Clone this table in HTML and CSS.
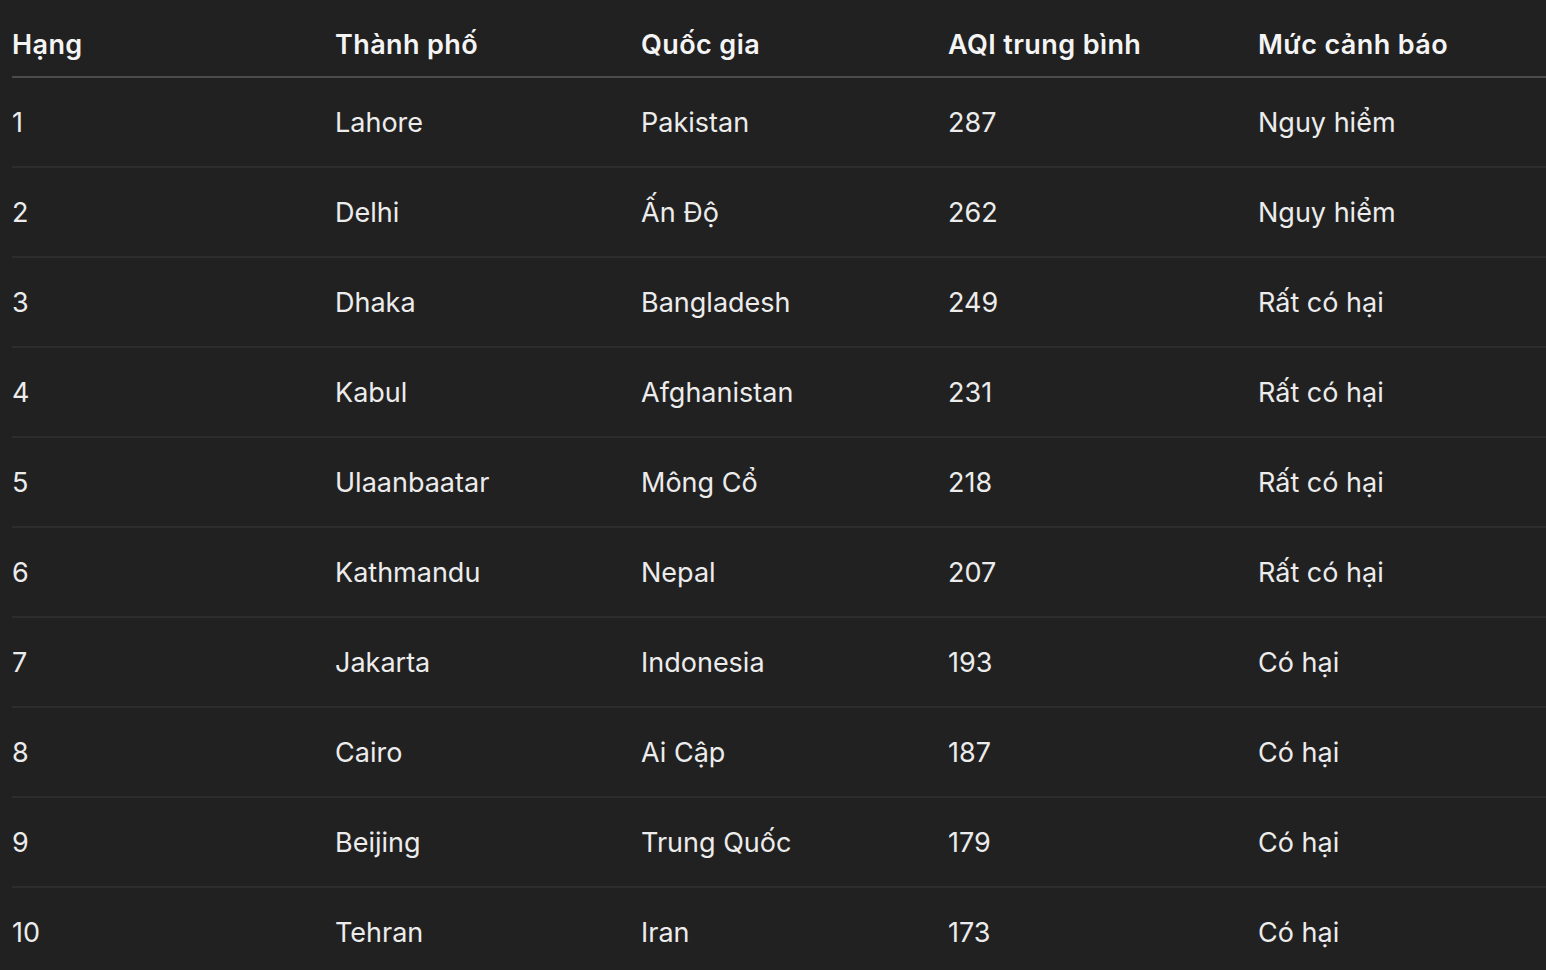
FILE: index.html
```html
<!DOCTYPE html>
<html lang="vi">
<head>
<meta charset="utf-8">
<title>AQI</title>
<link rel="stylesheet" href="styles.css">
</head>
<body>
<div class="wrap">
<table class="aqi">
<colgroup>
<col class="c1"><col class="c2"><col class="c3"><col class="c4"><col class="c5">
</colgroup>
<thead>
<tr><th>Hạng</th><th>Thành phố</th><th>Quốc gia</th><th>AQI trung bình</th><th>Mức cảnh báo</th></tr>
</thead>
<tbody>
<tr><td>1</td><td>Lahore</td><td>Pakistan</td><td>287</td><td>Nguy hiểm</td></tr>
<tr><td>2</td><td>Delhi</td><td>Ấn Độ</td><td>262</td><td>Nguy hiểm</td></tr>
<tr><td>3</td><td>Dhaka</td><td>Bangladesh</td><td>249</td><td>Rất có hại</td></tr>
<tr><td>4</td><td>Kabul</td><td>Afghanistan</td><td>231</td><td>Rất có hại</td></tr>
<tr><td>5</td><td>Ulaanbaatar</td><td>Mông Cổ</td><td>218</td><td>Rất có hại</td></tr>
<tr><td>6</td><td>Kathmandu</td><td>Nepal</td><td>207</td><td>Rất có hại</td></tr>
<tr><td>7</td><td>Jakarta</td><td>Indonesia</td><td>193</td><td>Có hại</td></tr>
<tr><td>8</td><td>Cairo</td><td>Ai Cập</td><td>187</td><td>Có hại</td></tr>
<tr><td>9</td><td>Beijing</td><td>Trung Quốc</td><td>179</td><td>Có hại</td></tr>
<tr><td>10</td><td>Tehran</td><td>Iran</td><td>173</td><td>Có hại</td></tr>
</tbody>
</table>
</div>
</body>
</html>
```
FILE: styles.css
```css
html, body {
  margin: 0;
  padding: 0;
  background: #212121;
}
body {
  font-family: Inter, "Noto Sans", sans-serif;
  color: #ececec;
}
.wrap {
  padding-left: 12px;
}
.aqi {
  border-collapse: collapse;
  table-layout: fixed;
  width: 100%;
  font-size: 27px;
  line-height: 36px;
}
.c1 { width: 323px; }
.c2 { width: 306px; }
.c3 { width: 307px; }
.c4 { width: 310px; }
.c5 { width: auto; }
.aqi th {
  text-align: left;
  font-weight: 600;
  letter-spacing: 0.4px;
  color: #f4f4f4;
  padding: 27px 0 13px 0;
  border-bottom: 2px solid #4b4b4b;
  white-space: nowrap;
}
.aqi td {
  padding: 27px 0 25px 0;
  border-bottom: 2px solid #2d2d2d;
  white-space: nowrap;
}
```
